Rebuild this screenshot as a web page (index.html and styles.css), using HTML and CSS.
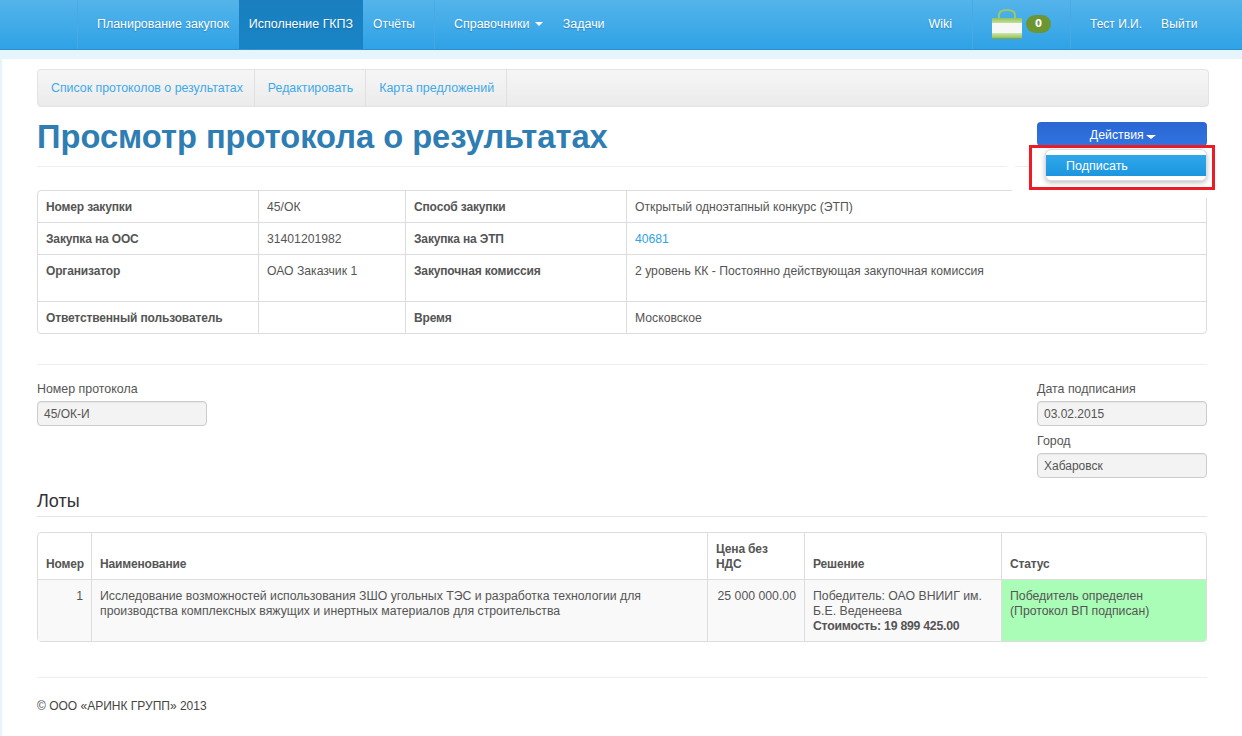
FILE: index.html
```html
<!DOCTYPE html>
<html lang="ru">
<head>
<meta charset="utf-8">
<title>Просмотр протокола о результатах</title>
<link rel="stylesheet" href="styles.css">
</head>
<body>
<nav class="topbar">
  <div class="nav-brand"></div>
  <div class="nav-group nav-main">
    <a class="nav-item">Планирование закупок</a>
    <a class="nav-item nav-active">Исполнение ГКПЗ</a>
    <a class="nav-item nav-small">Отчёты</a>
  </div>
  <div class="nav-group nav-dirs">
    <a class="nav-item">Справочники <span class="caret"></span></a>
    <a class="nav-item">Задачи</a>
  </div>
  <div class="nav-spacer"></div>
  <div class="nav-group nav-wiki"><a class="nav-item">Wiki</a></div>
  <div class="nav-group nav-cart">
    <svg class="bag" width="30" height="30" viewBox="0 0 30 30">
      <defs>
        <linearGradient id="bag-top" x1="0" y1="0" x2="0" y2="1">
          <stop offset="0" stop-color="#8fc05a"/>
          <stop offset="1" stop-color="#c3e09a"/>
        </linearGradient>
        <linearGradient id="bag-bottom" x1="0" y1="0" x2="0" y2="1">
          <stop offset="0" stop-color="#cfe6ad"/>
          <stop offset="1" stop-color="#93c25c"/>
        </linearGradient>
      </defs>
      <path d="M7 10 V6 Q7 1 15 1 Q23 1 23 6 V10" fill="none" stroke="#9cc86a" stroke-width="2"/>
      <rect x="0" y="9" width="30" height="5" fill="url(#bag-top)"/>
      <rect x="0" y="14" width="30" height="10" fill="#f7f8f5"/>
      <rect x="0" y="24" width="30" height="5" fill="url(#bag-bottom)"/>
      <rect x="0" y="29" width="30" height="1" fill="#7da44c"/>
    </svg>
    <span class="badge">0</span>
  </div>
  <div class="nav-group nav-user">
    <a class="nav-item nav-small">Тест И.И.</a>
    <a class="nav-item nav-small nav-logout">Выйти</a>
  </div>
</nav>

<main class="page">
  <div class="subnav">
    <a class="subnav-item">Список протоколов о результатах</a>
    <a class="subnav-item">Редактировать</a>
    <a class="subnav-item">Карта предложений</a>
  </div>

  <header class="page-header">
    <h1>Просмотр протокола о результатах</h1>
    <button class="actions-btn">Действия <span class="caret caret-wide"></span></button>
  </header>

  <table class="grid info">
    <colgroup><col class="c-a"><col class="c-b"><col class="c-c"><col class="c-d"></colgroup>
    <tr><th>Номер закупки</th><td>45/ОК</td><th>Способ закупки</th><td>Открытый одноэтапный конкурс (ЭТП)</td></tr>
    <tr><th>Закупка на ООС</th><td>31401201982</td><th>Закупка на ЭТП</th><td><a class="link">40681</a></td></tr>
    <tr class="tall"><th>Организатор</th><td>ОАО Заказчик 1</td><th>Закупочная комиссия</th><td>2 уровень КК - Постоянно действующая закупочная комиссия</td></tr>
    <tr><th>Ответственный пользователь</th><td></td><th>Время</th><td>Московское</td></tr>
  </table>

  <hr class="rule rule-form">

  <section class="form-row">
    <div class="field-col">
      <label class="field-label">Номер протокола</label>
      <div class="field">45/ОК-И</div>
    </div>
    <div class="field-col">
      <label class="field-label">Дата подписания</label>
      <div class="field">03.02.2015</div>
      <label class="field-label">Город</label>
      <div class="field">Хабаровск</div>
    </div>
  </section>

  <h2 class="lots-title">Лоты</h2>

  <table class="grid lots">
    <colgroup><col class="l-a"><col class="l-b"><col class="l-c"><col class="l-d"><col class="l-e"></colgroup>
    <tr class="lots-head"><th>Номер</th><th>Наименование</th><th>Цена без НДС</th><th>Решение</th><th>Статус</th></tr>
    <tr class="lots-row">
      <td class="num">1</td>
      <td>Исследование возможностей использования ЗШО угольных ТЭС и разработка технологии для производства комплексных вяжущих и инертных материалов для строительства</td>
      <td class="num">25 000 000.00</td>
      <td>Победитель: ОАО ВНИИГ им. Б.Е. Веденеева<br><b>Стоимость: 19 899 425.00</b></td>
      <td class="status">Победитель определен (Протокол ВП подписан)</td>
    </tr>
  </table>

  <hr class="rule rule-footer">
  <footer class="footer">© ООО «АРИНК ГРУПП» 2013</footer>

  <div class="callout">
    <div class="menu"><a class="menu-item">Подписать</a></div>
  </div>
</main>
</body>
</html>
```
FILE: styles.css
```css
* { box-sizing: border-box; }
html, body { margin: 0; padding: 0; }
body {
  background: #e6f5fd;
  font-family: "Liberation Sans", Arial, sans-serif;
  font-size: 12px;
  line-height: 15px;
  color: #555;
  height: 736px;
  overflow: hidden;
}

/* top bar */
.topbar {
  display: flex;
  height: 50px;
  background: linear-gradient(#54b4ea, #2fa2e6);
  border-bottom: 1px solid #2b8fd0;
  color: #fff;
}
.nav-brand { width: 78px; border-right: 1px solid #4aa8e4; }
.nav-group { display: flex; }
.nav-main { padding-left: 9px; border-right: 1px solid #4aa8e4; width: 357px; }
.nav-dirs { padding-left: 9px; }
.nav-spacer { flex: 1; }
.nav-item {
  display: block;
  padding: 0 10px;
  line-height: 49px;
  font-size: 12.450px;
  white-space: nowrap;
  text-shadow: 0 1px 1px rgba(0, 60, 110, .35);
}
.nav-small { font-size: 12px; }
.nav-logout { margin-left: -1px; letter-spacing: .2px; }
.nav-active { background: linear-gradient(#1a7fbe, #1884c6); }
.caret {
  display: inline-block;
  width: 0;
  height: 0;
  margin-left: 2px;
  vertical-align: 2px;
  border-left: 4px solid transparent;
  border-right: 4px solid transparent;
  border-top: 4px solid #fff;
}
.caret-wide {
  margin-left: -1px;
  vertical-align: 0;
  border-left-width: 5px;
  border-right-width: 5px;
}
.nav-wiki { padding-right: 10px; border-right: 1px solid #4aa8e4; }
.nav-cart {
  width: 98px;
  padding-left: 19px;
  align-items: flex-start;
  border-right: 1px solid #4aa8e4;
}
.bag { margin-top: 9px; }
.badge {
  margin: 15px 0 0 4px;
  width: 25px;
  height: 18px;
  border-radius: 9px;
  background: #6b9632;
  color: #fff;
  font: bold 10px/17px "DejaVu Sans", sans-serif;
  text-align: center;
}
.nav-user { width: 171px; padding-left: 9px; }

/* page */
.page {
  position: relative;
  margin: 9px 0 0 2px;
  padding: 10px 33px 0 35px;
  height: 677px;
  background: #fff;
}
.subnav {
  display: flex;
  width: 1172px;
  height: 38px;
  background: linear-gradient(#f6f6f6, #ebebeb);
  border: 1px solid #e3e3e3;
  border-radius: 4px;
}
.subnav-item {
  padding: 0 11px 0 13px;
  font-size: 12.350px;
  line-height: 36px;
  color: #3fa9e9;
  border-right: 1px solid #e0e0e0;
}
.subnav-item + .subnav-item { padding-right: 12px; }
.subnav-item:last-child { font-size: 12.500px; }
.page-header {
  display: flex;
  justify-content: space-between;
  align-items: flex-start;
  height: 60px;
  border-bottom: 1px solid #eee;
  width: 1170px;
}
h1 {
  margin: 11px 0 0;
  font-size: 32.650px;
  line-height: 38px;
  color: #2e7db3;
}
.actions-btn {
  margin-top: 15px;
  width: 170px;
  height: 24px;
  padding: 2px 0 0 2px;
  border: 0;
  border-radius: 4px;
  background: linear-gradient(#2a66d4, #3074e0);
  color: #fff;
  font: 12.300px "Liberation Sans", Arial, sans-serif;
}

/* tables */
.grid {
  width: 1170px;
  table-layout: fixed;
  border-collapse: separate;
  border-spacing: 0;
  border: 1px solid #ddd;
  border-radius: 4px;
}
.grid th, .grid td {
  padding: 9px 8px 7px;
  text-align: left;
  vertical-align: top;
  border-top: 1px solid #ddd;
  border-left: 1px solid #ddd;
  font-size: 12.200px;
  line-height: 15px;
}
.grid th { font-size: 12px; letter-spacing: -.15px; }
.grid b { letter-spacing: -.25px; }
.grid.lots td { font-size: 12.270px; }
.grid tr:first-child > * { border-top: 0; }
.grid tr > *:first-child { border-left: 0; }
.info { margin-top: 23px; }
.c-a { width: 220px; }
.c-b { width: 147px; }
.c-c { width: 221px; }
.tall th, .tall td { height: 47px; }
.link { color: #2fa2e6; }

.rule { border: 0; border-top: 1px solid #eee; margin: 0; width: 1170px; }
.rule-form { margin-top: 30px; }

.form-row { display: flex; justify-content: space-between; width: 1170px; margin-top: 16px; }
.field-col { width: 170px; }
.field-label { display: block; height: 20px; font-size: 12.400px; line-height: 17px; }
.field {
  height: 25px;
  margin-bottom: 7px;
  padding: 0 6px;
  line-height: 24px;
  background: #f3f3f3;
  border: 1px solid #ccc;
  border-radius: 4px;
  box-shadow: inset 0 1px 1px rgba(0, 0, 0, .05);
}
.lots-title {
  width: 1170px;
  margin: 4px 0 15px;
  padding-bottom: 2px;
  border-bottom: 1px solid #e5e5e5;
  font-size: 18px;
  font-weight: normal;
  line-height: 25px;
  color: #333;
}
.l-a { width: 53px; }
.l-c { width: 97px; }
.l-d { width: 197px; }
.l-e { width: 205px; }
.lots-head th { vertical-align: bottom; }
.lots-row td { background: #f9f9f9; }
.lots-row td.num { text-align: right; }
.lots-row td.status { background: #a9fdb6; }
.rule-footer { margin-top: 35px; }
.footer { margin-top: 20px; padding-top: 1px; color: #444; }

/* annotated dropdown */
.callout {
  position: absolute;
  left: 1027px;
  top: 86px;
  width: 186px;
  height: 45px;
  padding: 1px 5px 0 13px;
  background: #fff;
  border: 3px solid #ed1c24;
}
.callout::before {
  content: "";
  position: absolute;
  left: -20px;
  top: 42px;
  width: 195px;
  height: 8px;
  background: #fff;
}
.callout::after {
  content: "";
  position: absolute;
  left: -25px;
  top: 17px;
  width: 8px;
  height: 3px;
  background: #fff;
}
.menu {
  width: 162px;
  height: 32px;
  padding-top: 5px;
  background: #fff;
  border: 1px solid #ddd;
  border-radius: 6px;
  box-shadow: 0 2px 5px rgba(0, 0, 0, .25);
}
.menu-item {
  display: block;
  height: 21px;
  padding-left: 20px;
  line-height: 22px;
  font-size: 12.500px;
  color: #fff;
  background: linear-gradient(#2fa8ea, #1b95de);
}
```
